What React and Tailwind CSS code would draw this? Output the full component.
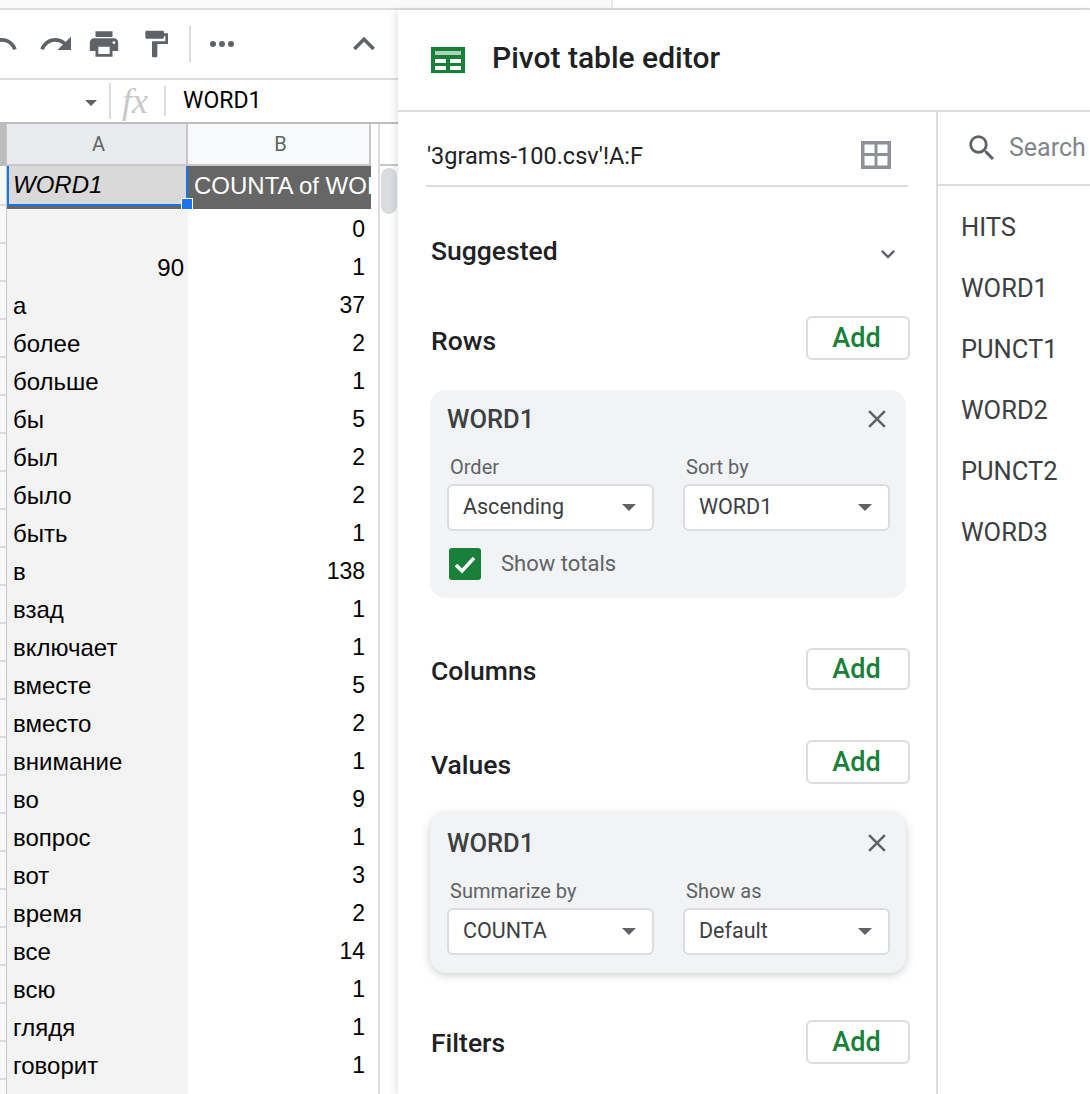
import { MdUndo, MdRedo, MdPrint, MdFormatPaint, MdClose, MdSearch, MdKeyboardArrowDown, MdKeyboardArrowUp } from "react-icons/md";

const rows = [
  ["", "0"],
  ["90", "1", true],
  ["а", "37"],
  ["более", "2"],
  ["больше", "1"],
  ["бы", "5"],
  ["был", "2"],
  ["было", "2"],
  ["быть", "1"],
  ["в", "138"],
  ["взад", "1"],
  ["включает", "1"],
  ["вместе", "5"],
  ["вместо", "2"],
  ["внимание", "1"],
  ["во", "9"],
  ["вопрос", "1"],
  ["вот", "3"],
  ["время", "2"],
  ["все", "14"],
  ["всю", "1"],
  ["глядя", "1"],
  ["говорит", "1"],
  ["", "1"],
];

const fields = ["HITS", "WORD1", "PUNCT1", "WORD2", "PUNCT2", "WORD3"];

function Caret() {
  return <div className="w-0 h-0 border-x-[7px] border-x-transparent border-t-[7px] border-t-[#5f6368]" />;
}

function Select({ label, value }) {
  return (
    <div className="w-[207px]">
      <div className="pl-[3px] text-[20px] leading-[24px] text-[#5f6368]">{label}</div>
      <div className="mt-[5px] h-[47px] flex items-center justify-between pl-[14px] pr-[16px] bg-white border-2 border-[#dadce0] rounded-[6px] text-[21.5px] text-[#3c4043]">
        <span>{value}</span>
        <Caret />
      </div>
    </div>
  );
}

function AddRow({ label, className, btn = "h-[44px]", labelPad = "pt-[5px]" }) {
  return (
    <div className={"flex items-center justify-between pl-[5px] mr-[-2px] h-[44px] " + className}>
      <span className={"text-[26.5px] font-medium text-[#202124] " + labelPad}>{label}</span>
      <button className={"w-[104px] pr-[3px] bg-white border-2 border-[#dadce0] rounded-[6px] text-[27px] font-medium text-[#188038] leading-none " + btn}>
        Add
      </button>
    </div>
  );
}

function Card({ left, right, children, className }) {
  return (
    <div className={"ml-[4px] w-[476px] bg-[#f1f3f4] rounded-[16px] pl-[17px] pr-[16px] " + className}>
      <div className="flex items-center justify-between h-[30px] pr-[2px]">
        <span className="text-[25.5px] font-medium text-[#3c4043]">WORD1</span>
        <MdClose className="text-[#5f6368] mr-[-4px]" size={30} />
      </div>
      <div className="flex justify-between mt-[21px]">
        <Select label={left[0]} value={left[1]} />
        <Select label={right[0]} value={right[1]} />
      </div>
      {children}
    </div>
  );
}

function SheetIcon() {
  return (
    <svg width="34" height="26" viewBox="0 0 34 26">
      <rect width="34" height="26" fill="#188038" />
      <rect x="4" y="4" width="26" height="4" fill="#a8d5b5" />
      <rect x="4" y="12" width="11" height="4" fill="#fff" />
      <rect x="19" y="12" width="11" height="4" fill="#fff" />
      <rect x="4" y="19" width="11" height="4" fill="#fff" />
      <rect x="19" y="19" width="11" height="4" fill="#fff" />
    </svg>
  );
}

function GridIcon() {
  return (
    <svg width="30" height="28" viewBox="0 0 30 28" className="text-[#8d9196]">
      <path fill="currentColor" fillRule="evenodd" d="M0 0h30v28H0zM3.500 3.500v8.500h10V3.500zM16.500 3.500v8.500h10V3.500zM3.500 15v9.500h10V15zM16.500 15v9.500h10V15z" />
    </svg>
  );
}

export default function App() {
  return (
    <div className="w-[1090px] h-[1094px] overflow-hidden bg-white flex flex-col font-['Roboto',sans-serif]">
      {/* strip of the window behind */}
      <div className="h-[10px] shrink-0 border-b-2 border-[#dadce0] flex">
        <div className="w-[613px] border-r-2 border-[#e8eaed] bg-[#fafafa]" />
      </div>

      <div className="flex flex-1 min-h-0">
        {/* Sheet */}
        <div className="w-[398px] shrink-0 flex flex-col">
          <div className="h-[70px] shrink-0 border-b-2 border-[#dadce0] flex items-center text-[#5f6368] overflow-hidden">
            <MdUndo className="ml-[-17px] shrink-0" size={36} />
            <MdRedo className="ml-[19px] shrink-0" size={36} />
            <MdPrint className="ml-[13px] shrink-0" size={34} />
            <MdFormatPaint className="ml-[19px] shrink-0" size={32} />
            <div className="ml-[17px] w-[2px] h-[36px] bg-[#dadce0] shrink-0" />
            <div className="ml-[19px] flex gap-[3px] shrink-0">
              <div className="w-[6px] h-[6px] rounded-full bg-[#5f6368]" />
              <div className="w-[6px] h-[6px] rounded-full bg-[#5f6368]" />
              <div className="w-[6px] h-[6px] rounded-full bg-[#5f6368]" />
            </div>
            <MdKeyboardArrowUp className="ml-[108px] shrink-0" size={44} />
          </div>

          <div className="h-[44px] shrink-0 border-b-2 border-[#bdbdbd] flex items-center">
            <div className="ml-[85px] mt-[4px] w-0 h-0 border-x-[6px] border-x-transparent border-t-[6px] border-t-[#5f6368]" />
            <div className="ml-[12px] w-[2px] h-[36px] bg-[#dadce0]" />
            <span className="ml-[11px] w-[27px] text-[36px] leading-none italic text-[#c8c8c8] font-['Liberation_Serif',serif]">fx</span>
            <div className="ml-[15px] w-[2px] h-[30px] bg-[#dadce0]" />
            <span className="ml-[17px] text-[23px] text-black font-['Roboto',sans-serif]">WORD1</span>
          </div>

          <div className="flex-1 min-h-0 flex overflow-hidden font-['Liberation_Sans',sans-serif] text-[23px] text-black">
            {/* row gutter */}
            <div className="w-[7px] shrink-0 bg-[#f8f9fa] border-r-[1px] border-[#c8c8c8]">
              <div className="h-[42px] bg-[#bdbdbd]" />
              {rows.map((r, i) => (
                <div key={i} className={"border-b-2 border-[#dadce0] " + (i === 0 ? "h-[40px]" : "h-[38px]")} />
              ))}
            </div>

            <div className="w-[364px] shrink-0">
              <div className="flex h-[42px] border-b-2 border-[#c8c8c8] text-[20px] text-[#5f6368] font-['Roboto',sans-serif]">
                <div className="w-[181px] bg-[#e8eaed] border-r-2 border-[#c8c8c8] flex items-center justify-center pl-[4px]">A</div>
                <div className="flex-1 bg-[#f8f9fa] border-r-2 border-[#c8c8c8] flex items-center justify-center pl-[4px]">B</div>
              </div>
              <div className="flex h-[43px] bg-[#666666] text-[24px]">
                <div className="relative w-[181px] h-[40px] bg-[#d9d9d9] border-2 border-t-0 border-[#1a73e8] pl-[4px] flex items-center italic">
                  WORD1
                  <div className="absolute right-[-7px] bottom-[-6px] w-[12px] h-[12px] bg-[#1a73e8] border border-white" />
                </div>
                <div className="flex-1 pl-[6px] pb-[4px] flex items-center overflow-hidden whitespace-nowrap text-white">
                  COUNTA of WORD1
                </div>
              </div>
              {rows.map((r, i) => (
                <div key={i} className={"flex h-[38px] leading-[38px] " + (i === 0 ? "mt-[1px]" : "")}>
                  <div className={"w-[181px] bg-[#f3f3f3] pl-[6px] text-[24px] leading-[40px] " + (r[2] ? "text-right pr-[4px]" : "")}>{r[0]}</div>
                  <div className="flex-1 text-right pr-[6px]">{r[1]}</div>
                </div>
              ))}
            </div>

            <div className="flex-1 border-l-2 border-[#dadce0] ml-[7px]">
              <div className="h-[42px] border-b-2 border-[#c8c8c8]" />
              <div className="ml-[1px] mt-[2px] w-[16px] h-[46px] rounded-full bg-[#dadce0]" />
            </div>
          </div>
        </div>

        {/* Pivot table editor */}
        <div className="flex-1 min-w-0 flex flex-col bg-white shadow-[-3px_0_6px_rgba(60,64,67,0.12)] z-10">
          <div className="h-[102px] shrink-0 border-b-2 border-[#dadce0] flex items-center pl-[33px]">
            <SheetIcon />
            <span className="ml-[27px] mb-[5px] text-[30px] font-medium text-[#202124]">Pivot table editor</span>
          </div>

          <div className="flex-1 min-h-0 flex">
            <div className="w-[540px] shrink-0 border-r-2 border-[#dadce0] pl-[28px] pr-[28px]">
              <div className="h-[75px] pt-[13px] flex items-center justify-between border-b-2 border-[#dadce0] pr-[17px] text-[23.5px] text-[#202124]">
                <span className="pl-[1px] pt-[4px]">'3grams-100.csv'!A:F</span>
                <GridIcon />
              </div>

              <div className="mt-[46px] h-[36px] flex items-center justify-between pl-[5px] pr-[6px]">
                <span className="text-[26.5px] font-medium text-[#202124]">Suggested</span>
                <MdKeyboardArrowDown className="text-[#5f6368] mt-[6px]" size={28} />
              </div>

              <AddRow label="Rows" className="mt-[47px]" />
              <Card left={["Order", "Ascending"]} right={["Sort by", "WORD1"]} className="mt-[30px] pt-[14px] h-[208px]">
                <div className="flex items-center mt-[16px] ml-[2px]">
                  <div className="w-[32px] h-[32px] bg-[#188038] rounded-[3px] flex items-center justify-center">
                    <svg width="24" height="24" viewBox="0 0 24 24">
                      <path d="M3 13l6 6L21 6" fill="none" stroke="#fff" strokeWidth="3.500" />
                    </svg>
                  </div>
                  <span className="ml-[20px] text-[22px] text-[#5f6368]">Show totals</span>
                </div>
              </Card>

              <AddRow label="Columns" className="mt-[49px]" btn="h-[42px]" labelPad="pt-[4px]" />
              <AddRow label="Values" className="mt-[49px]" />
              <Card
                left={["Summarize by", "COUNTA"]}
                right={["Show as", "Default"]}
                className="mt-[29px] pt-[15px] h-[160px] shadow-[0_2px_8px_rgba(60,64,67,0.25)]"
              />
              <AddRow label="Filters" className="mt-[47px]" labelPad="pt-[1px]" />
            </div>

            <div className="flex-1 min-w-0 overflow-hidden">
              <div className="h-[74px] border-b-2 border-[#dadce0] flex items-center pl-[29px] whitespace-nowrap">
                <MdSearch className="text-[#5f6368] ml-[-2px]" size={34} />
                <span className="ml-[10px] text-[25px] text-[#80868b]">Search</span>
              </div>
              <div className="pl-[23px] pt-[19px]">
                {fields.map((f) => (
                  <div key={f} className="h-[61px] leading-[44px] text-[25.5px] text-[#3c4043]">{f}</div>
                ))}
              </div>
            </div>
          </div>
        </div>
      </div>
    </div>
  );
}
